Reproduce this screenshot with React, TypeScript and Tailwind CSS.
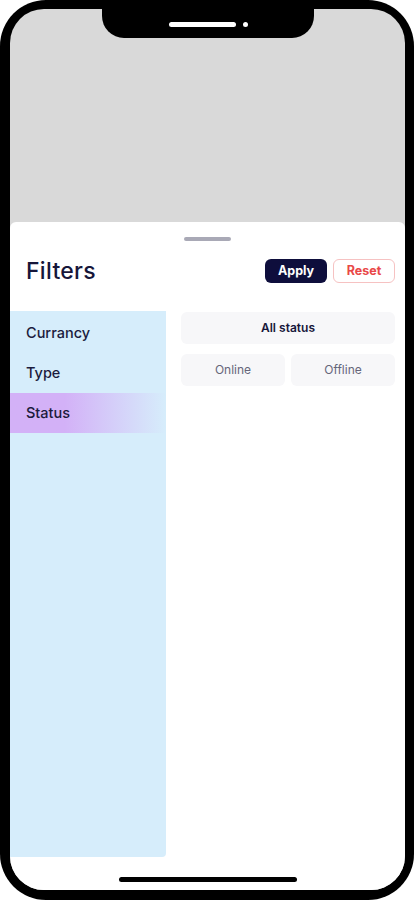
import { useState } from "react";

const categories = ["Currancy", "Type", "Status"];

const font = { fontFamily: "Inter, 'Noto Sans', sans-serif" };

const App = () => {
	const [active, setActive] = useState("Status");
	const [status, setStatus] = useState("All status");

	return (
		<div className="w-[414px] h-[900px] bg-white" style={font}>
			<div className="relative w-full h-full bg-black rounded-[46px] pt-[9px] pl-[10px] pr-[9px] pb-[10px]">
				{/* notch */}
				<div className="absolute top-0 left-[102px] w-[212px] h-[38px] bg-black rounded-b-[22px] flex items-center justify-center gap-[7px] pt-[10px] z-10">
					<div className="w-[67px] h-[5px] rounded-full bg-white" />
					<div className="w-[5px] h-[5px] rounded-full bg-white" />
				</div>

				<div className="w-full h-full bg-[#d9d9d9] rounded-[34px] overflow-hidden flex flex-col">
					<div className="h-[213px] flex-shrink-0" />

					<div className="flex-1 bg-white rounded-t-[6px] flex flex-col">
						<div className="flex justify-center pt-[15px]">
							<div className="w-[47px] h-[4px] rounded-full bg-[#a9a9b6]" />
						</div>

						<div className="flex items-center justify-between pl-[16px] pr-[10px] mt-[18px]">
							<h2 className="text-[23px] font-medium text-[#16163a] leading-none tracking-[0.3px]">
								Filters
							</h2>
							<div className="flex items-center gap-[6px]">
								<button className="w-[62px] h-[24px] rounded-[6px] bg-[#0e0e3c] text-white text-[12.5px] font-bold">
									Apply
								</button>
								<button className="w-[62px] h-[24px] rounded-[6px] border border-[#f6c2c2] text-[#e94848] text-[12.5px] font-bold">
									Reset
								</button>
							</div>
						</div>

						<div className="flex flex-1 gap-[15px] mt-[28px] pr-[10px]">
							<div className="w-[156px] bg-[#d6edfb] rounded-br-[4px] pt-[2px] flex flex-col">
								{categories.map((c) => (
									<button
										key={c}
										onClick={() => setActive(c)}
										className={`h-[40px] pl-[16px] text-left text-[14.5px] font-medium text-[#1b1b3d] ${
											active === c
												? "bg-gradient-to-r from-[#d3b1f7] via-[#d3b1f7] via-35% to-transparent"
												: ""
										}`}
									>
										{c}
									</button>
								))}
							</div>

							<div className="flex-1 flex flex-col gap-[10px] pt-[1px]">
								<button
									onClick={() => setStatus("All status")}
									className={`h-[32px] rounded-[6px] bg-[#f7f7f9] text-[12px] ${
										status === "All status"
											? "font-semibold text-[#16163a]"
											: "text-[#666670]"
									}`}
								>
									All status
								</button>
								<div className="grid grid-cols-2 gap-[6px]">
									{["Online", "Offline"].map((s) => (
										<button
											key={s}
											onClick={() => setStatus(s)}
											className={`h-[32px] rounded-[6px] bg-[#f7f7f9] text-[12px] ${
												status === s
													? "font-semibold text-[#16163a]"
													: "text-[#66667a]"
											}`}
										>
											{s}
										</button>
									))}
								</div>
							</div>
						</div>

						<div className="flex justify-center pt-[20px] pb-[8px]">
							<div className="w-[178px] h-[5px] rounded-full bg-black" />
						</div>
					</div>
				</div>
			</div>
		</div>
	);
};

export default App;
